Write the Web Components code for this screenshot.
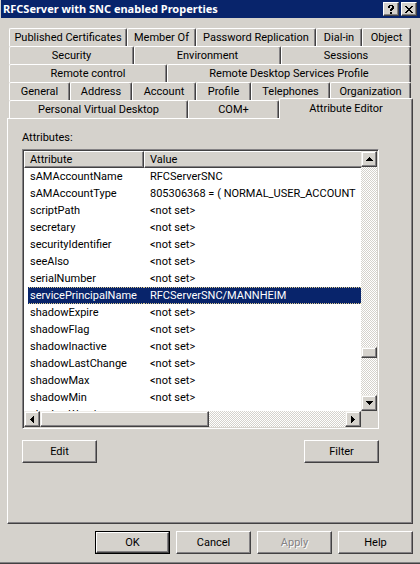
<!DOCTYPE html>
<html lang="en">
<head>
<meta charset="utf-8">
<title>RFCServer with SNC enabled Properties</title>
<style>
  body {
    margin: 0;
    background: #d5d2cc;
    color: #000;
    font: 11px/14px Roboto, "Liberation Sans", sans-serif;
    --face: #d5d2cc;
    --navy: #08246b;
    --shade: #848284;
    --dark: #424142;
  }
</style>
</head>
<body>
<property-dialog heading="RFCServer with SNC enabled Properties">
  <tab-row columns="118fr 69fr 120fr 46fr 49fr">
    <tab-button>Published Certificates</tab-button>
    <tab-button>Member Of</tab-button>
    <tab-button>Password Replication</tab-button>
    <tab-button>Dial-in</tab-button>
    <tab-button>Object</tab-button>
  </tab-row>
  <tab-row columns="125fr 147fr 130fr">
    <tab-button>Security</tab-button>
    <tab-button>Environment</tab-button>
    <tab-button>Sessions</tab-button>
  </tab-row>
  <tab-row columns="158fr 244fr">
    <tab-button>Remote control</tab-button>
    <tab-button>Remote Desktop Services Profile</tab-button>
  </tab-row>
  <tab-row columns="61fr 62fr 64fr 55fr 79fr 81fr">
    <tab-button>General</tab-button>
    <tab-button>Address</tab-button>
    <tab-button>Account</tab-button>
    <tab-button>Profile</tab-button>
    <tab-button>Telephones</tab-button>
    <tab-button>Organization</tab-button>
  </tab-row>
  <tab-row front columns="179fr 91fr 134fr">
    <tab-button>Personal Virtual Desktop</tab-button>
    <tab-button>COM+</tab-button>
    <tab-button active>Attribute Editor</tab-button>
  </tab-row>
  <tab-panel slot="panel">
    <attribute-list label="Attributes:"></attribute-list>
    <push-button slot="actions">Edit</push-button>
    <push-button slot="actions">Filter</push-button>
  </tab-panel>
  <push-button slot="footer" default>OK</push-button>
  <push-button slot="footer">Cancel</push-button>
  <push-button slot="footer" disabled>Apply</push-button>
  <push-button slot="footer">Help</push-button>
</property-dialog>

<script>
class PropertyDialog extends HTMLElement {
  constructor() {
    super();
    this.attachShadow({ mode: "open" });
  }
  connectedCallback() {
    this.shadowRoot.innerHTML = `
      <style>
        :host {
          display: block;
          border-bottom: 1px solid var(--dark);
          box-shadow: inset 0 -1px var(--shade);
        }
        header {
          display: flex;
          align-items: center;
          gap: 2px;
          height: 18px;
          margin-left: 1px;
          padding: 0 3px 0 2px;
          background: var(--navy);
          color: #fff;
        }
        h1 {
          flex: 1;
          margin: 0;
          font: bold 11px/18px "Noto Sans", "Open Sans", sans-serif;
          white-space: nowrap;
        }
        header button {
          display: grid;
          place-items: center;
          width: 16px;
          height: 14px;
          padding: 0;
          border: 1px solid;
          border-color: #fff var(--dark) var(--dark) #fff;
          box-shadow: inset -1px -1px var(--shade);
          background: var(--face);
        }
        .tabs { padding-top: 10px; }
        footer {
          display: flex;
          justify-content: flex-end;
          gap: 6px;
          padding: 7px 7px 9px;
        }
      </style>
      <header>
        <h1>${this.getAttribute("heading")}</h1>
        <button aria-label="Help">
          <svg width="6" height="9" viewBox="0 0 6 9" shape-rendering="crispEdges">
            <path d="M1 0h4v1h1v3h-1v1h-1v1h-2v-2h1v-1h1v-2h-2v2h-2v-2h1zM2 7h2v2h-2z"/>
          </svg>
        </button>
        <button aria-label="Close">
          <svg width="8" height="7" viewBox="0 0 8 7" shape-rendering="crispEdges">
            <path d="M0 0h2v1h1v1h2v-1h1v-1h2v1h-1v1h-1v1h-1v1h1v1h1v1h1v1h-2v-1h-1v-1h-2v1h-1v1h-2v-1h1v-1h1v-1h1v-1h-1v-1h-1v-1h-1z"/>
          </svg>
        </button>
      </header>
      <nav class="tabs"><slot></slot></nav>
      <slot name="panel"></slot>
      <footer><slot name="footer"></slot></footer>
    `;
  }
}

class TabRow extends HTMLElement {
  constructor() {
    super();
    this.attachShadow({ mode: "open" });
  }
  connectedCallback() {
    this.shadowRoot.innerHTML = `
      <style>
        :host {
          display: grid;
          grid-template-columns: ${this.getAttribute("columns")};
          height: 18px;
          margin: 0 9px;
        }
        :host([front]) { margin-right: 7px; }
      </style>
      <slot></slot>
    `;
  }
}

class TabButton extends HTMLElement {
  constructor() {
    super();
    this.attachShadow({ mode: "open" });
    this.shadowRoot.innerHTML = `
      <style>
        :host { display: grid; min-width: 0; }
        /* the front tab stands two pixels taller and covers the panel's edge */
        :host([active]) {
          position: relative;
          margin: -2px 0 -1px;
        }
        button {
          min-width: 0;
          padding: 0;
          border: solid;
          border-width: 1px 1px 0 1px;
          border-color: #fff var(--dark) #fff #fff;
          border-radius: 2px 2px 0 0;
          box-shadow: inset -1px 0 var(--shade);
          background: var(--face);
          color: inherit;
          font: inherit;
          white-space: nowrap;
        }
      </style>
      <button><slot></slot></button>
    `;
  }
}

class TabPanel extends HTMLElement {
  constructor() {
    super();
    this.attachShadow({ mode: "open" });
    this.shadowRoot.innerHTML = `
      <style>
        :host {
          display: block;
          margin: 0 7px;
          padding: 12px 33px 60px 14px;
          border: 1px solid;
          border-color: #fff var(--dark) var(--dark) #fff;
          box-shadow: inset -1px -1px var(--shade);
        }
        .actions {
          display: flex;
          justify-content: space-between;
          margin-top: 11px;
        }
      </style>
      <slot></slot>
      <div class="actions"><slot name="actions"></slot></div>
    `;
  }
}

class PushButton extends HTMLElement {
  constructor() {
    super();
    this.attachShadow({ mode: "open" });
  }
  connectedCallback() {
    this.shadowRoot.innerHTML = `
      <style>
        :host { display: grid; width: 75px; height: 23px; box-sizing: border-box; }
        :host([default]) { border: 1px solid #000; }
        button {
          padding: 0;
          border: 1px solid;
          border-color: #fff var(--dark) var(--dark) #fff;
          box-shadow: inset -1px -1px var(--shade);
          background: var(--face);
          color: inherit;
          font: inherit;
        }
        button:disabled {
          color: var(--shade);
          text-shadow: 1px 1px #fff;
        }
      </style>
      <button ${this.hasAttribute("disabled") ? "disabled" : ""}><slot></slot></button>
    `;
  }
}

class ScrollTrack extends HTMLElement {
  constructor() {
    super();
    this.attachShadow({ mode: "open" });
  }
  connectedCallback() {
    const vertical = this.hasAttribute("vertical");
    const parts = `16px ${this.getAttribute("parts")} 16px`;
    const back = vertical ? "M3 0h1v1h1v1h1v1h1v1H0v-1h1v-1h1v-1h1z" : "M3 0h1v7h-1v-1h-1v-1h-1v-1h-1v-1h1v-1h1v-1h1z";
    const next = vertical ? "M0 0h7v1h-1v1h-1v1h-1v1h-1v-1h-1v-1h-1v-1h-1z" : "M0 0h1v1h1v1h1v1h1v1h-1v1h-1v1h-1v1h-1z";
    const size = vertical ? `width="7" height="4"` : `width="4" height="7"`;
    this.shadowRoot.innerHTML = `
      <style>
        :host {
          display: grid;
          grid-template-${vertical ? "rows" : "columns"}: ${parts};
          background: repeating-conic-gradient(#fff 0 25%, #d5d2cc 0 50%) 0 0 / 2px 2px;
        }
        button, .thumb {
          display: grid;
          place-items: center;
          padding: 0;
          border: 1px solid;
          border-color: #eeece8 var(--dark) var(--dark) #eeece8;
          box-shadow: inset -1px -1px var(--shade), inset 1px 1px #fff;
          background: var(--face);
        }
      </style>
      <button aria-label="Scroll back"><svg ${size} shape-rendering="crispEdges"><path d="${back}"/></svg></button>
      ${vertical ? "<span></span>" : ""}
      <div class="thumb"></div>
      <span></span>
      <button aria-label="Scroll on"><svg ${size} shape-rendering="crispEdges"><path d="${next}"/></svg></button>
    `;
  }
}

const notSet = "&lt;not set&gt;";
const attributes = [
  ["sAMAccountName", "RFCServerSNC"],
  ["sAMAccountType", "805306368 = ( NORMAL_USER_ACCOUNT"],
  ["scriptPath", notSet],
  ["secretary", notSet],
  ["securityIdentifier", notSet],
  ["seeAlso", notSet],
  ["serialNumber", notSet],
  ["servicePrincipalName", "RFCServerSNC/MANNHEIM"],
  ["shadowExpire", notSet],
  ["shadowFlag", notSet],
  ["shadowInactive", notSet],
  ["shadowLastChange", notSet],
  ["shadowMax", notSet],
  ["shadowMin", notSet],
  ["shadowWarning", ""]
];
const selected = "servicePrincipalName";

class AttributeList extends HTMLElement {
  constructor() {
    super();
    this.attachShadow({ mode: "open" });
  }
  connectedCallback() {
    const rows = attributes.map(([name, value]) => `
      <tr${name === selected ? ' class="selected"' : ""}><td>${name}</td><td>${value}</td></tr>`).join("");
    this.shadowRoot.innerHTML = `
      <style>
        :host { display: block; }
        .label { margin-bottom: 4px; }
        .frame {
          display: grid;
          grid-template-columns: minmax(0, 1fr) 16px;
          grid-template-rows: 260px 16px;
          padding: 1px;
          border: 1px solid;
          border-color: var(--shade) #fff #fff var(--shade);
          box-shadow: inset 1px 1px var(--dark);
        }
        .view {
          overflow: hidden;
          background: #fff;
        }
        table {
          width: 100%;
          table-layout: fixed;
          border-collapse: separate;
          border-spacing: 0;
        }
        .name { width: 120px; }
        th {
          box-sizing: border-box;
          height: 17px;
          padding: 0 5px;
          border: 1px solid;
          border-color: #fff var(--dark) var(--dark) #fff;
          box-shadow: inset -1px -1px var(--shade);
          background: var(--face);
          font-weight: normal;
          line-height: 14px;
          text-align: left;
        }
        th:last-child { border-right: 0; box-shadow: inset 0 -1px var(--shade); }
        td {
          height: 17px;
          padding: 0 0 0 6px;
          line-height: 17px;
          white-space: nowrap;
        }
        .selected td {
          box-sizing: border-box;
          background: var(--navy);
          color: #fff;
          border-top: 1px dotted #d8c88c;
          border-bottom: 1px dotted #d8c88c;
          line-height: 15px;
        }
        .selected td:first-child { clip-path: inset(0 0 0 4px); }
      </style>
      <div class="label" id="label">${this.getAttribute("label")}</div>
      <div class="frame">
        <div class="view">
          <table aria-labelledby="label">
            <thead><tr><th class="name">Attribute</th><th>Value</th></tr></thead>
            <tbody>${rows}</tbody>
          </table>
        </div>
        <scroll-track vertical parts="180fr 11px 37fr"></scroll-track>
        <scroll-track parts="169fr 136fr"></scroll-track>
      </div>
    `;
  }
}

customElements.define("property-dialog", PropertyDialog);
customElements.define("tab-row", TabRow);
customElements.define("tab-button", TabButton);
customElements.define("tab-panel", TabPanel);
customElements.define("push-button", PushButton);
customElements.define("scroll-track", ScrollTrack);
customElements.define("attribute-list", AttributeList);
</script>
</body>
</html>
